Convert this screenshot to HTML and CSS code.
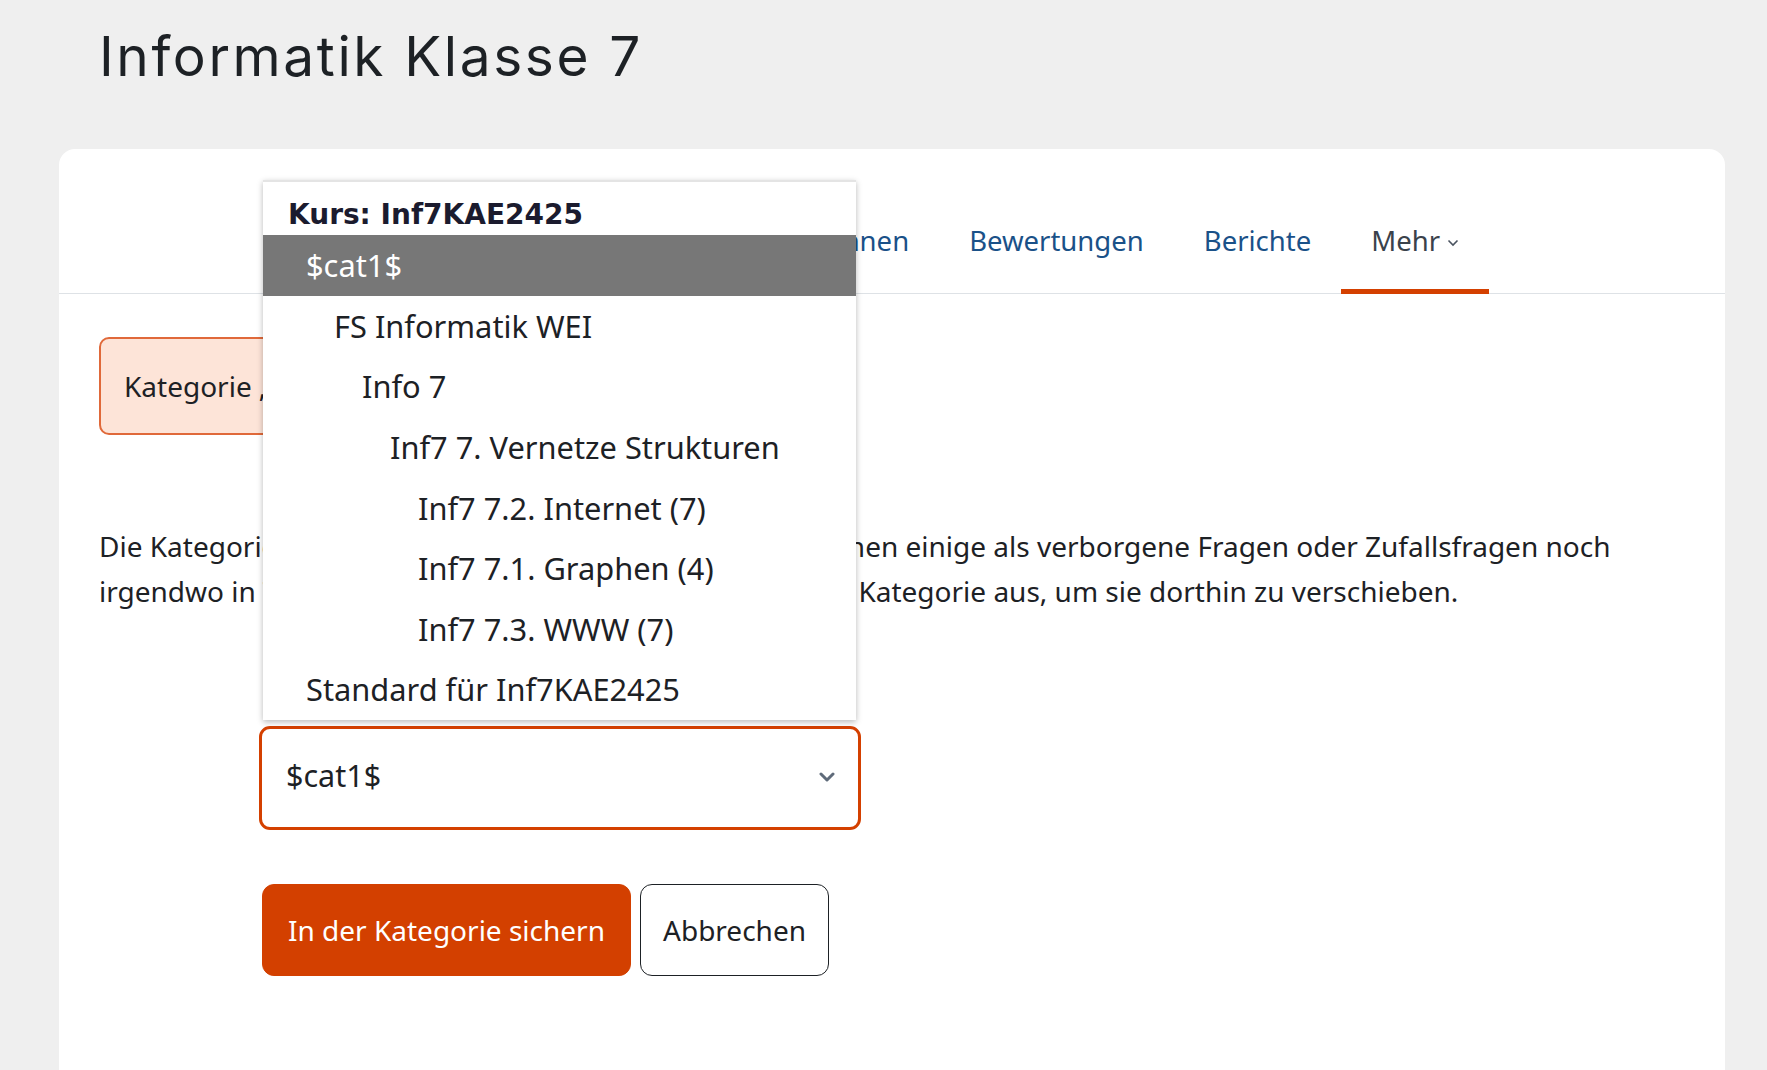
FILE: index.html
```html
<!DOCTYPE html>
<html lang="de">
<head>
<meta charset="utf-8">
<title>Informatik Klasse 7</title>
<link rel="stylesheet" href="styles.css">
</head>
<body>
<header class="page-header">
  <h1 class="page-title">Informatik Klasse 7</h1>
</header>
<main class="card">
  <nav class="secnav">
    <a class="tab" href="#">Kurs</a>
    <a class="tab" href="#">Einstellungen</a>
    <a class="tab" href="#">Teilnehmer/innen</a>
    <a class="tab" href="#">Bewertungen</a>
    <a class="tab" href="#">Berichte</a>
    <a class="tab tab-more active" href="#">Mehr
      <svg class="more-chev" width="12" height="8" viewBox="0 0 12 8"><polyline points="1.5,1.5 6,6 10.5,1.5" fill="none" stroke="#4a5360" stroke-width="1.6"/></svg>
    </a>
  </nav>
  <div class="card-body">
    <div class="alert">Kategorie „$cat1$“ löschen</div>
    <p class="desc">Die Kategorie „$cat1$“ enthält aktuell 127 Fragen, von denen einige als verborgene Fragen oder Zufallsfragen noch<br>irgendwo in Tests benötigt werden. Wählen Sie eine neue Kategorie aus, um sie dorthin zu verschieben.</p>
    <form class="move-form">
      <div class="select">
        <span class="select-value">$cat1$</span>
        <svg class="select-chev" width="16" height="10" viewBox="0 0 16 10"><polyline points="2,2 8,8 14,2" fill="none" stroke="#5f6b7a" stroke-width="3" stroke-linecap="round" stroke-linejoin="round"/></svg>
      </div>
      <div class="buttons">
        <button type="button" class="btn btn-primary">In der Kategorie sichern</button>
        <button type="button" class="btn btn-secondary">Abbrechen</button>
      </div>
    </form>
  </div>
</main>
<div class="dropdown">
  <div class="dd-group">Kurs: Inf7KAE2425</div>
  <div class="dd-item selected lvl0">$cat1$</div>
  <div class="dd-item lvl1">FS Informatik WEI</div>
  <div class="dd-item lvl2">Info 7</div>
  <div class="dd-item lvl3">Inf7 7. Vernetze Strukturen</div>
  <div class="dd-item lvl4">Inf7 7.2. Internet (7)</div>
  <div class="dd-item lvl4">Inf7 7.1. Graphen (4)</div>
  <div class="dd-item lvl4">Inf7 7.3. WWW (7)</div>
  <div class="dd-item lvl0">Standard für Inf7KAE2425</div>
</div>
</body>
</html>
```
FILE: styles.css
```css
html, body {
  margin: 0;
  padding: 0;
}
body {
  background: #efefef;
  color: #1d2125;
  font-family: "Noto Sans", "Liberation Sans", sans-serif;
  height: 1070px;
  overflow: hidden;
}
.page-header {
  padding: 0 0 0 99px;
  height: 149px;
}
.page-title {
  margin: 0;
  padding-top: 21px;
  font-family: Inter, "Noto Sans", sans-serif;
  font-weight: 400;
  font-size: 55px;
  line-height: 70px;
  letter-spacing: 2.6px;
  color: #1d2125;
}
.card {
  margin-left: 59px;
  width: 1666px;
  background: #fff;
  border-radius: 16px 16px 0 0;
  height: 921px;
}
.secnav {
  height: 144px;
  border-bottom: 1px solid #dee2e6;
  display: flex;
  align-items: flex-end;
  padding-left: 237px;
  box-sizing: content-box;
}
.tab {
  position: relative;
  display: flex;
  align-items: center;
  gap: 7px;
  padding: 0 30px 32px;
  height: 40px;
  font-size: 27.5px;
  line-height: 40px;
  color: #1a5188;
  text-decoration: none;
  white-space: nowrap;
}
.tab-more {
  color: #3a424b;
}
.tab.active::after {
  content: "";
  position: absolute;
  left: 0;
  right: 0;
  bottom: -1px;
  height: 5px;
  background: #d44000;
}
.more-chev {
  margin-top: 4px;
}
.card-body {
  padding: 43px 40px 0;
}
.alert {
  box-sizing: border-box;
  width: 700px;
  height: 98px;
  display: flex;
  align-items: center;
  padding: 0 23px;
  background: #fde4d8;
  border: 2px solid #e0693a;
  border-radius: 10px;
  font-size: 28px;
}
.desc {
  margin: 89px 0 0;
  font-size: 28px;
  line-height: 45px;
  white-space: nowrap;
}
.move-form {
  margin-top: 112px;
  padding-left: 160px;
}
.select {
  box-sizing: border-box;
  width: 602px;
  height: 104px;
  border: 3px solid #d44000;
  border-radius: 11px;
  display: flex;
  align-items: center;
  justify-content: space-between;
  padding: 0 23px 0 24px;
}
.select-value {
  font-size: 30.5px;
  margin-top: -6px;
}
.select-chev {
  margin-top: -2px;
}
.buttons {
  display: flex;
  gap: 9px;
  margin-top: 54px;
  padding-left: 3px;
}
.btn {
  box-sizing: border-box;
  height: 92px;
  border-radius: 12px;
  font-family: "Noto Sans", sans-serif;
  font-size: 28px;
  padding: 0 16px;
  cursor: pointer;
  white-space: nowrap;
}
.btn-primary {
  width: 369px;
  background: #d34000;
  color: #fff;
  border: 1px solid #d34000;
}
.btn-secondary {
  width: 189px;
  background: #fff;
  color: #1d2125;
  border: 1.5px solid #1d2125;
}
.dropdown {
  position: absolute;
  left: 263px;
  top: 180px;
  width: 593px;
  height: 540px;
  box-sizing: border-box;
  background: #fff;
  border-top: 2px solid #e4e4e4;
  box-shadow: 0 2px 6px rgba(0,0,0,0.28);
  font-family: "Noto Sans", sans-serif;
  color: #1d2125;
}
.dd-group {
  height: 53px;
  padding-left: 25px;
  display: flex;
  align-items: flex-end;
  font-family: "DejaVu Sans", "Noto Sans", sans-serif;
  font-weight: 700;
  font-size: 28px;
  line-height: 40px;
  color: #1b1b2e;
}
.dd-item {
  height: 60.6px;
  display: flex;
  align-items: center;
  font-size: 30.8px;
  white-space: nowrap;
}
.dd-item.selected {
  background: #777777;
  color: #fff;
}
.lvl0 { padding-left: 43px; }
.lvl1 { padding-left: 71px; }
.lvl2 { padding-left: 99px; }
.lvl3 { padding-left: 127px; }
.lvl4 { padding-left: 155px; }
```
